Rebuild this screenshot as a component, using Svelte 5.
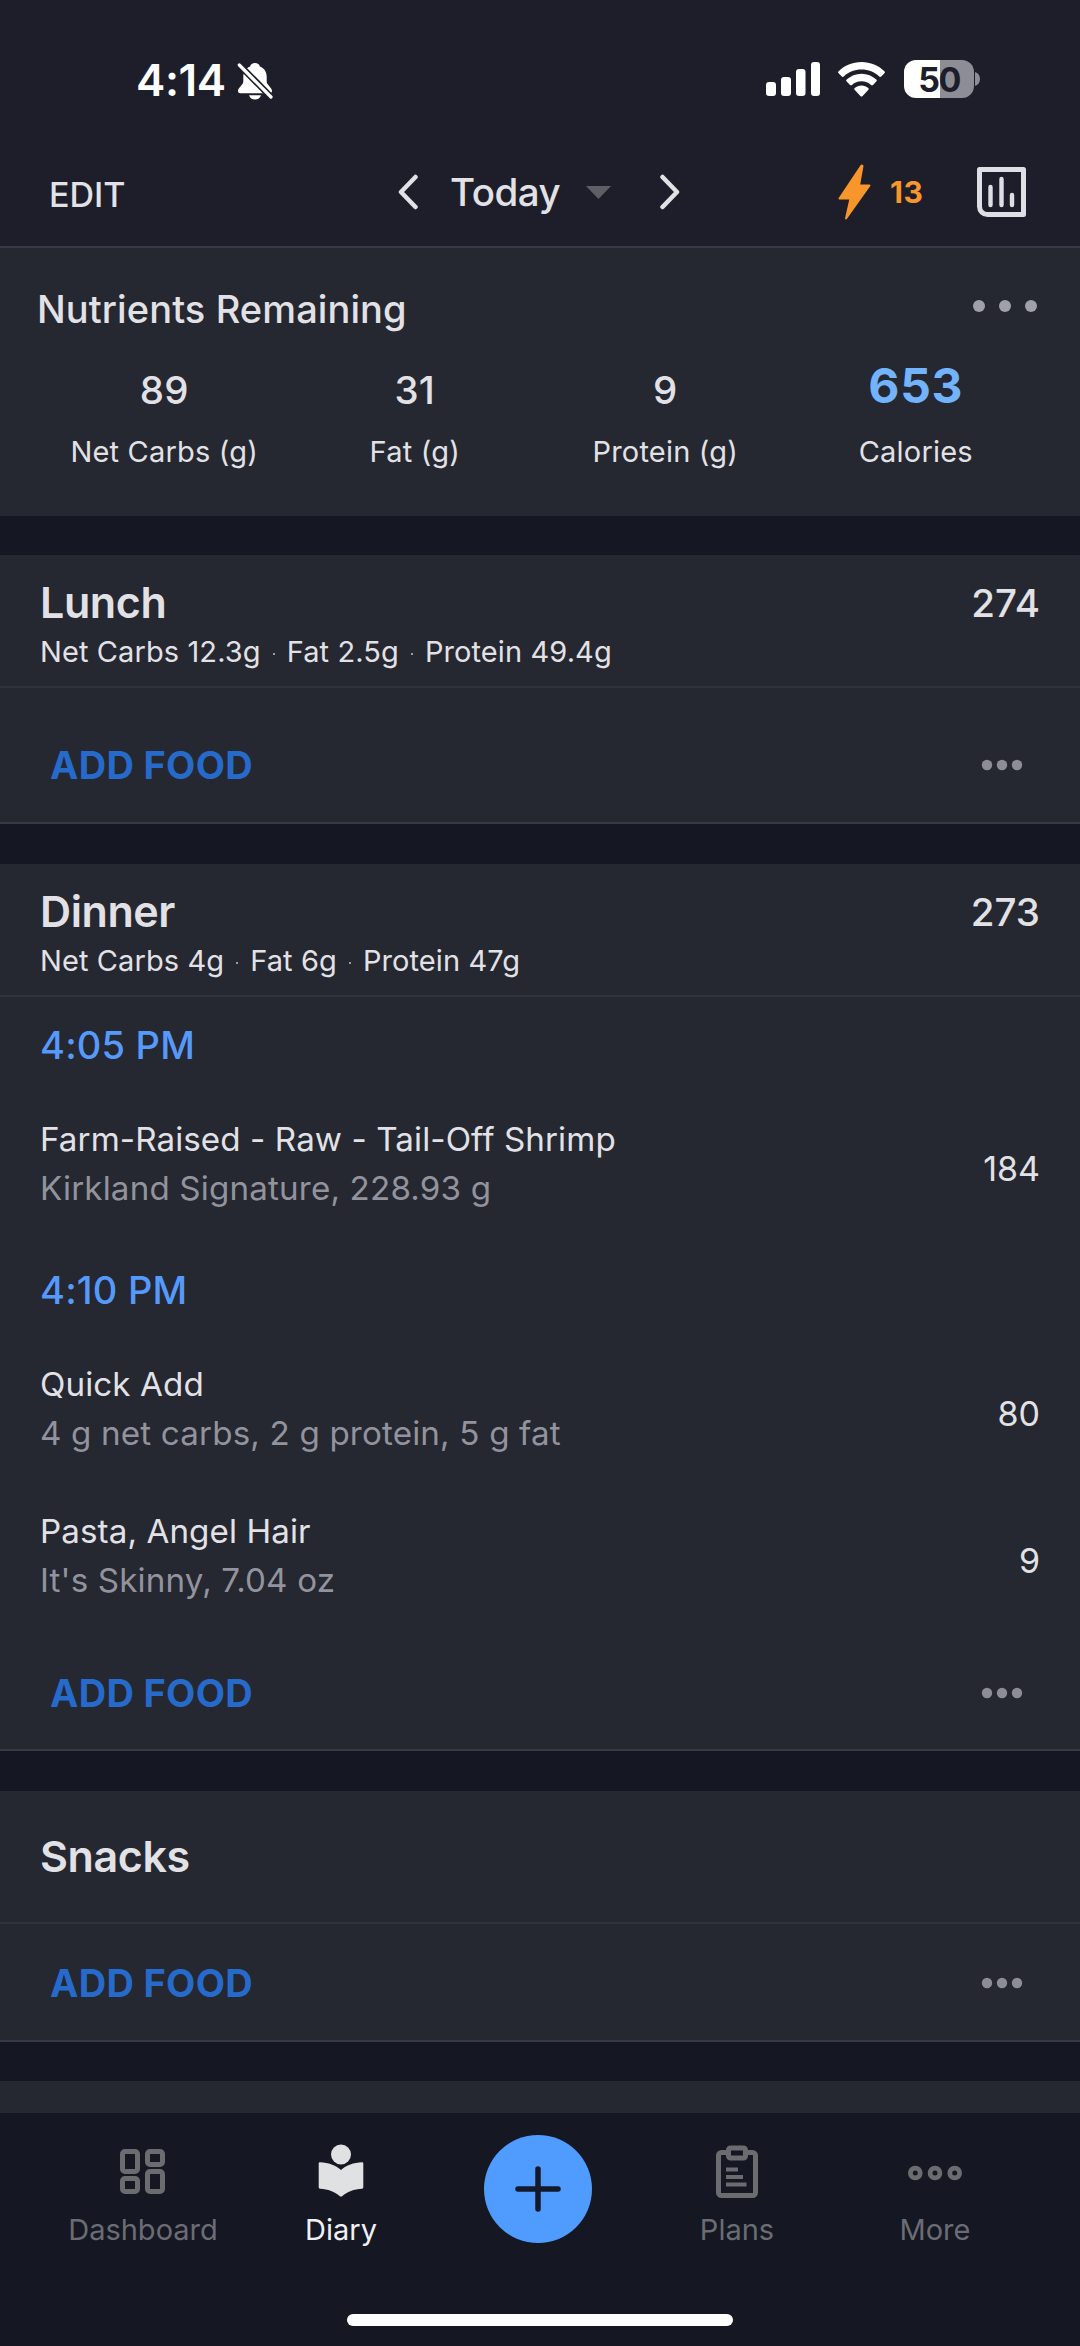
<script>
  const nutrients = [
    { value: '89', label: 'Net Carbs (g)' },
    { value: '31', label: 'Fat (g)' },
    { value: '9', label: 'Protein (g)' },
    { value: '653', label: 'Calories', main: true }
  ];
  const dinner = [
    { time: '4:05 PM', foods: [{ name: 'Farm-Raised - Raw - Tail-Off Shrimp', info: 'Kirkland Signature, 228.93 g', cal: 184 }] },
    { time: '4:10 PM', foods: [
      { name: 'Quick Add', info: '4 g net carbs, 2 g protein, 5 g fat', cal: 80 },
      { name: 'Pasta, Angel Hair', info: "It's Skinny, 7.04 oz", cal: 9 }
    ] }
  ];
  const meals = [
    { name: 'Lunch', cal: 274, macros: ['Net Carbs 12.3g', 'Fat 2.5g', 'Protein 49.4g'], groups: [], kind: 'lunch' },
    { name: 'Dinner', cal: 273, macros: ['Net Carbs 4g', 'Fat 6g', 'Protein 47g'], groups: dinner, kind: 'dinner' },
    { name: 'Snacks', cal: null, macros: null, groups: [], kind: 'snacks' }
  ];
</script>

<div class="screen">
  <div class="status">
    <div class="clock">
      <span>4:14</span>
      <svg width="36" height="38" viewBox="0 0 36 38">
        <path d="M18 1c-2.600 0-4.400 1.500-4.900 3.400C8.500 6 6.300 10 6.300 15v4.500C6.300 23 1 25.500 1 29c0 1.400.8 2.200 2.300 2.200h29.400c1.500 0 2.300-.8 2.300-2.200 0-3.500-5.300-6-5.300-9.500V15c0-5-2.200-9-6.800-10.600C22.400 2.500 20.600 1 18 1zM12 33.200h12c-.8 2.700-3 4.300-6 4.300s-5.200-1.600-6-4.300z" fill="#fff" />
        <path d="M2.500 3 34 35" stroke="#1d1e29" stroke-width="6.500" />
        <path d="M2.300 3 34 35" stroke="#fff" stroke-width="3.200" stroke-linecap="round" />
      </svg>
    </div>
    <div class="signals">
      <svg width="54" height="34" viewBox="0 0 54 34" fill="#fff">
        <rect x="0" y="20" width="10" height="14" rx="3" />
        <rect x="15" y="15" width="10" height="19" rx="3" />
        <rect x="30" y="7" width="9.500" height="27" rx="3" />
        <rect x="45" y="0" width="9" height="34" rx="3" />
      </svg>
      <svg class="wifi" width="47" height="35" viewBox="0 0 47 35" fill="#fff">
        <path d="M23.500 0C14.500 0 6.500 3.500.6 9.200c-.7.7-.7 1.400 0 2l3.200 3.300c.6.600 1.300.600 2 0C10.500 10.200 16.700 7.600 23.500 7.600s13 2.600 17.700 6.900c.7.6 1.400.6 2 0l3.200-3.300c.7-.6.7-1.300 0-2C40.500 3.500 32.500 0 23.500 0z" />
        <path d="M23.500 11.800c-5.800 0-10.900 2.200-14.800 5.800-.7.700-.7 1.400 0 2l3.300 3.300c.6.600 1.300.600 2 0 2.500-2.200 5.800-3.600 9.500-3.600s7 1.400 9.500 3.600c.7.6 1.400.6 2 0l3.300-3.300c.7-.6.7-1.300 0-2-3.900-3.600-9-5.800-14.800-5.800z" />
        <path d="M23.500 23.500c-2.600 0-4.900 1-6.700 2.500-.7.600-.7 1.300 0 2l5.600 6c.8.800 1.400.8 2.200 0l5.600-6c.7-.7.7-1.400 0-2-1.800-1.500-4.100-2.500-6.700-2.500z" />
      </svg>
      <div class="battery"><span>50</span></div>
      <svg class="nub" width="5" height="14" viewBox="0 0 5 14"><path d="M0 0c3 1 5 3.500 5 7s-2 6-5 7z" fill="#8d8e95" /></svg>
    </div>
  </div>

  <header>
    <span class="edit">EDIT</span>
    <div class="date">
      <svg width="20" height="36" viewBox="0 0 20 36"><path d="M17.500 3 3 18l14.500 15" class="chev" /></svg>
      <span>Today</span>
      <svg class="tri" width="25" height="13" viewBox="0 0 25 13"><path d="M0 0h25L12.500 13z" fill="#5e5f64" /></svg>
      <svg width="20" height="36" viewBox="0 0 20 36"><path d="M2.500 3 17 18 2.500 33" class="chev" /></svg>
    </div>
    <div class="tools">
      <svg width="33" height="56" viewBox="0 0 33 56"><path d="M23.500 1.500 1.500 34.500h11L8 54.500 31.500 21.500H21L24.500 2z" fill="#f9962b" stroke="#f9962b" stroke-width="2" stroke-linejoin="round" /></svg>
      <span>13</span>
      <svg class="chart" width="49" height="50" viewBox="0 0 49 50" fill="none" stroke="#dedfe5">
        <path d="M2.500 2.500h44v45H10.500a8 8 0 0 1-8-8z" stroke-width="5" stroke-linejoin="round" />
        <path d="M13.500 20v18M24.500 12v26M35 28v10" stroke-width="4.400" stroke-linecap="round" />
      </svg>
    </div>
  </header>

  <section class="nutrients">
    <div class="title-row">
      <h2>Nutrients Remaining</h2>
      <svg width="64" height="12" viewBox="0 0 64 12" fill="#a0a1a8"><circle cx="6" cy="6" r="6" /><circle cx="32" cy="6" r="6" /><circle cx="58" cy="6" r="6" /></svg>
    </div>
    <div class="grid">
      {#each nutrients as n}
        <div class="nutrient">
          <span class="value" class:main={n.main}>{n.value}</span>
          <span class="label">{n.label}</span>
        </div>
      {/each}
    </div>
  </section>

  {#each meals as meal}
    <section class="meal {meal.kind}">
      <div class="meal-head">
        <div>
          <h3>{meal.name}</h3>
          {#if meal.macros}
            <p class="macros">{meal.macros[0]}<i></i>{meal.macros[1]}<i></i>{meal.macros[2]}</p>
          {/if}
        </div>
        {#if meal.cal}<span class="total">{meal.cal}</span>{/if}
      </div>
      {#each meal.groups as group}
        <div class="time">{group.time}</div>
        {#each group.foods as food}
          <div class="food">
            <div class="desc">
              <p class="name">{food.name}</p>
              <p class="info">{food.info}</p>
            </div>
            <span>{food.cal}</span>
          </div>
        {/each}
      {/each}
      <div class="add">
        <span>ADD FOOD</span>
        <svg width="42" height="12" viewBox="0 0 42 12" fill="#8c8d95"><circle cx="6" cy="6" r="5.200" /><circle cx="21" cy="6" r="5.200" /><circle cx="36" cy="6" r="5.200" /></svg>
      </div>
    </section>
  {/each}

  <section class="next"></section>

  <nav>
    <div class="tabs">
      <div class="tab dash">
        <svg width="46" height="54" viewBox="0 0 46 54" fill="none" stroke="#6b6c70" stroke-width="5">
          <rect x="2.500" y="7.500" width="15" height="20" rx="2.500" /><rect x="27.500" y="7.500" width="15" height="13" rx="2.500" />
          <rect x="2.500" y="34.500" width="15" height="13" rx="2.500" /><rect x="27.500" y="27.500" width="15" height="20" rx="2.500" />
        </svg>
        <span>Dashboard</span>
      </div>
      <div class="tab diary">
        <svg width="46" height="54" viewBox="0 0 46 54" fill="#e0e1e2">
          <circle cx="23" cy="10.500" r="10" />
          <path d="M2 18.200c8.500.3 15.500 3 21 7.800 5.500-4.800 12.500-7.500 21-7.800.8 0 1.300.5 1.300 1.300v23.800c0 .8-.5 1.300-1.300 1.400-8 .4-15 3-19.600 7.300-1 .8-1.800.8-2.800 0C17 47.700 10 45.100 2 44.700c-.8-.1-1.300-.6-1.300-1.400V19.500c0-.8.5-1.300 1.300-1.300z" />
        </svg>
        <span>Diary</span>
      </div>
      <div class="plus">
        <svg width="46" height="46" viewBox="0 0 46 46"><path d="M23 3v40M3 23h40" stroke="#141a2b" stroke-width="5.500" stroke-linecap="round" /></svg>
      </div>
      <div class="tab plans">
        <svg width="42" height="54" viewBox="0 0 42 54" fill="none" stroke="#6b6c70" stroke-width="5">
          <path d="M11 8.500H5.500a3 3 0 0 0-3 3V48.500a3 3 0 0 0 3 3h31a3 3 0 0 0 3-3V11.500a3 3 0 0 0-3-3H31" />
          <rect x="12.500" y="4" width="17" height="10" rx="2" />
          <path d="M10 25.500h12M10 33h17M10 40.500h20.500" stroke-width="3.800" />
        </svg>
        <span>Plans</span>
      </div>
      <div class="tab more">
        <svg width="54" height="54" viewBox="0 0 54 54" fill="none" stroke="#6b6c70" stroke-width="4.800">
          <circle cx="7.300" cy="29" r="4.900" /><circle cx="27" cy="29" r="4.900" /><circle cx="46.700" cy="29" r="4.900" />
        </svg>
        <span>More</span>
      </div>
    </div>
    <div class="home"></div>
  </nav>
</div>

<style>
  :global(body) { background: #151722; }
  .screen {
    width: 1080px; height: 2346px; overflow: hidden; box-sizing: border-box;
    display: flex; flex-direction: column;
    background: #151722; color: #e2e2e6;
    font-family: Inter, "Liberation Sans", sans-serif;
    font-feature-settings: "calt" 0;
  }
  .screen :global(*) { box-sizing: border-box; }
  svg { display: block; flex: none; }
  h2, h3, p { margin: 0; font-weight: 500; }
  span, h2, h3, p, .time { white-space: nowrap; }

  .status { height: 136px; flex: none; background: #1d1e29; padding: 60px 100px 0 136px; display: flex; justify-content: space-between; align-items: flex-start; color: #fff; }
  .clock { display: flex; gap: 11px; font-size: 44px; line-height: 40px; font-weight: 600; letter-spacing: -0.400px; }
  .clock span { width: 90px; }
  .clock svg { margin-top: 2px; }
  .signals { display: flex; align-items: center; height: 38px; }
  .wifi { margin: 0 19px 0 18px; }
  .battery { width: 70px; height: 38px; border-radius: 12px; background: linear-gradient(90deg, #fff 51%, #8d8e95 51%); color: #1d1e29; font-size: 34px; font-weight: 700; line-height: 39px; text-align: center; letter-spacing: -1.500px; }
  .nub { margin-left: 1px; }

  header { height: 112px; flex: none; background: #1d1e29; border-bottom: 2px solid #373943; padding: 0 54px 0 49px; display: grid; grid-template-columns: 349px 1fr auto; }
  .edit { font-size: 34px; font-weight: 550; line-height: 118px; letter-spacing: 0; }
  .date { display: flex; align-items: center; height: 112px; font-size: 38.500px; font-weight: 470; }
  .date span { margin-left: 32px; width: 136px; letter-spacing: -0.500px; line-height: 112px; }
  .tri { margin-right: 49px; }
  .chev { fill: none; stroke: #e2e2e6; stroke-width: 4.500px; stroke-linecap: round; stroke-linejoin: round; }
  .tools { display: flex; align-items: center; height: 112px; color: #f9962b; font-size: 30px; font-weight: 700; }
  .tools span { margin-left: 19px; width: 87px; letter-spacing: 0.500px; }

  .nutrients { height: 268px; flex: none; background: #252731; padding: 36px 40px 0 37px; margin-bottom: 39px; }
  .title-row { display: flex; justify-content: space-between; height: 50px; padding-right: 3px; }
  h2 { font-size: 38px; line-height: 50px; letter-spacing: 0.100px; }
  .title-row svg { margin-top: 16px; }
  .grid { display: grid; grid-template-columns: repeat(4, 250.500px); margin: 20px 0 0 2px; }
  .nutrient { display: flex; flex-direction: column; align-items: center; }
  .value { height: 72px; line-height: 72px; font-size: 38.500px; font-weight: 470; letter-spacing: 0.300px; }
  .value.main { font-size: 48px; font-weight: 700; color: #72b3fc; line-height: 64px; letter-spacing: 0.700px; }
  .label { font-size: 29px; line-height: 40px; margin-top: 6px; letter-spacing: 0.200px; }

  .meal { flex: none; background: #252731; border-bottom: 2px solid #373943; margin-bottom: 40px; }
  .lunch { height: 269px; }
  .dinner { height: 887px; }
  .snacks { height: 251px; margin-bottom: 39px; }
  .meal-head { height: 133px; border-bottom: 2px solid #30323c; padding: 21px 40px 0; display: flex; justify-content: space-between; }
  .snacks .meal-head { padding-top: 39px; }
  h3 { font-size: 43px; line-height: 52px; letter-spacing: -0.400px; font-weight: 570; }
  .macros { font-size: 29px; line-height: 40px; margin-top: 4px; font-weight: 400; display: flex; align-items: center; letter-spacing: 0.100px; }
  .macros i { width: 2px; height: 2px; background: #9a9ba3; margin: 4px 12px 0; }
  .total { font-size: 38.500px; line-height: 54px; font-weight: 450; }
  .time { color: #559afb; font-size: 38px; font-weight: 450; height: 98px; line-height: 97px; padding-left: 40px; letter-spacing: 0.200px; }
  .food { height: 147px; padding: 0 40px; display: flex; justify-content: space-between; align-items: center; font-size: 34px; }
  .desc { padding-bottom: 9px; }
  .name, .info { line-height: 49px; font-weight: 400; font-size: 33.200px; letter-spacing: 0.080px; }
  .info { color: #92939c; letter-spacing: 0.150px; }
  .add { height: 118px; padding: 0 57px 0 50px; display: flex; align-items: center; justify-content: space-between; }
  .lunch .add { margin-top: 18px; }
  .add span { color: #266bcb; font-size: 38px; font-weight: 650; letter-spacing: 0.300px; }

  .next { height: 32px; flex: none; background: #252731; }
  nav { flex: 1; }
  .tabs { display: flex; height: 200px; }
  .tab { display: flex; flex-direction: column; align-items: center; padding-top: 31px; width: 198px; font-size: 29px; color: #6b6c74; }
  .tab span { line-height: 40px; margin-top: 12px; }
  .home { width: 386px; height: 12px; border-radius: 6px; background: #fff; margin: 1px auto 0; }
  .dash { margin-left: 44px; }
  .diary { color: #f0f0f4; }
  .plus { width: 108px; height: 108px; border-radius: 50%; background: #4f9bfe; display: flex; align-items: center; justify-content: center; margin: 22px 46px 0 44px; }
</style>
